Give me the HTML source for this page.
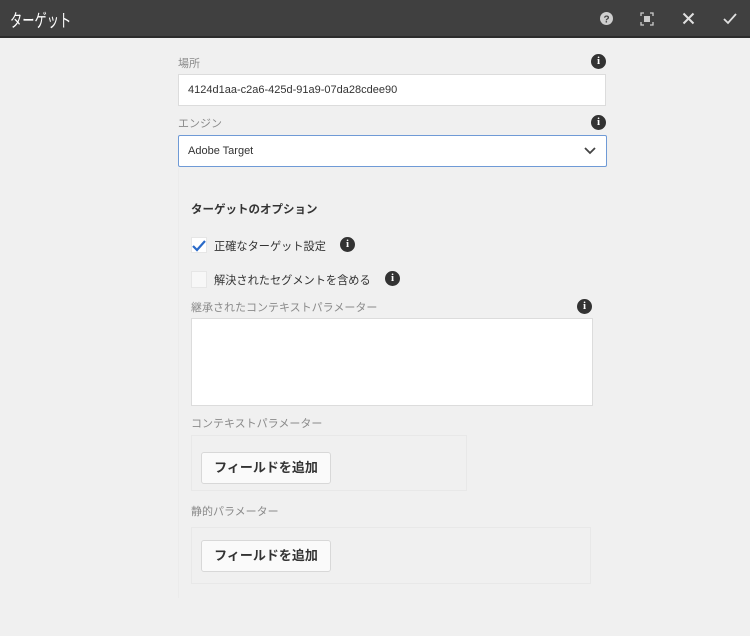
<!DOCTYPE html>
<html><head><meta charset="utf-8"><style>
*{box-sizing:border-box;margin:0;padding:0}
body{width:750px;height:636px;background:#f0f0f0;font-family:"Liberation Sans","Noto Sans CJK JP",sans-serif;position:relative;overflow:hidden}
.hdr{position:absolute;left:0;top:0;width:750px;height:38px;background:#404040;border-bottom:2px solid #2c2c2c}
.hdr .t{position:absolute;left:10px;top:7px;color:#fff;font-size:18px;transform:scaleX(0.68);transform-origin:left}
.a{position:absolute}
.lbl{position:absolute;font-size:11px;color:#8a8a8a}
.info{position:absolute;width:15px;height:15px;border-radius:50%;background:#333;color:#fff;font:bold 11px "Liberation Serif",serif;text-align:center;line-height:15px}
.inp{position:absolute;background:#fff;border:1px solid #dcdcdc;font-size:11px;color:#333;padding-left:9px}
.btn{position:absolute;background:#fafafa;border:1px solid #d8d8d8;border-radius:3px;font-size:13px;font-weight:bold;color:#333;text-align:center}
.box{position:absolute;border:1px solid #e8e8e8}
</style></head><body>
<div class="hdr"><div class="t">ターゲット</div>
<svg class="a" style="left:599px;top:11px" width="15" height="15"><circle cx="7.5" cy="7.5" r="6.5" fill="#cfcfcf"/><text x="7.5" y="11.5" font-size="10" font-weight="bold" text-anchor="middle" fill="#404040" font-family="Liberation Sans">?</text></svg>
<svg class="a" style="left:640px;top:12px" width="14" height="14" fill="none" stroke="#ccc" stroke-width="1.3"><path d="M1 4V1h3M10 1h3v3M13 10v3h-3M4 13H1v-3"/><rect x="4" y="4" width="6" height="6" fill="#ccc" stroke="none"/></svg>
<svg class="a" style="left:682px;top:12px" width="13" height="13" stroke="#e0e0e0" stroke-width="2"><path d="M1.5 1.5l10 10M11.5 1.5l-10 10"/></svg>
<svg class="a" style="left:723px;top:12px" width="14" height="13" fill="none" stroke="#e0e0e0" stroke-width="1.8"><path d="M1 7l4 4L13 2"/></svg>
</div>
<div class="box" style="left:178px;top:168px;width:428px;height:430px;border-color:#ebebeb;border-top:none;border-right:none;border-bottom:none"></div>
<div class="lbl" style="left:178px;top:55px">場所</div>
<div class="info" style="left:591px;top:54px">i</div>
<div class="inp" style="left:178px;top:74px;width:428px;height:32px;line-height:30px">4124d1aa-c2a6-425d-91a9-07da28cdee90</div>
<div class="lbl" style="left:178px;top:115px">エンジン</div>
<div class="info" style="left:591px;top:115px">i</div>
<div class="inp" style="left:178px;top:135px;width:429px;height:32px;line-height:30px;border-color:#6f9ad6;border-radius:2px">Adobe Target</div>
<svg class="a" style="left:584px;top:146px" width="12" height="9" fill="none" stroke="#444" stroke-width="1.8"><path d="M1 2l5 5 5-5"/></svg>
<div class="a" style="left:191px;top:201px;font-size:11.5px;font-weight:bold;color:#333">ターゲットのオプション</div>
<div class="a" style="left:191px;top:237px;width:16px;height:16px;background:#fff;border:1px solid #e6e6e6"></div>
<svg class="a" style="left:191px;top:238px" width="16" height="15" fill="none" stroke="#2a6ac8" stroke-width="2.2"><path d="M2 8l4 4 8-9"/></svg>
<div class="a" style="left:214px;top:238px;font-size:11.2px;color:#333">正確なターゲット設定</div>
<div class="info" style="left:340px;top:237px">i</div>
<div class="a" style="left:191px;top:271px;width:16px;height:17px;background:#f7f7f7;border:1px solid #e6e6e6"></div>
<div class="a" style="left:214px;top:272px;font-size:11.2px;color:#333">解決されたセグメントを含める</div>
<div class="info" style="left:385px;top:271px">i</div>
<div class="lbl" style="left:191px;top:299px">継承されたコンテキストパラメーター</div>
<div class="info" style="left:577px;top:299px">i</div>
<div class="inp" style="left:191px;top:318px;width:402px;height:88px"></div>
<div class="lbl" style="left:191px;top:415px">コンテキストパラメーター</div>
<div class="box" style="left:191px;top:435px;width:276px;height:56px"></div>
<div class="btn" style="left:201px;top:452px;width:130px;height:32px;line-height:30px">フィールドを追加</div>
<div class="lbl" style="left:191px;top:503px">静的パラメーター</div>
<div class="box" style="left:191px;top:527px;width:400px;height:57px"></div>
<div class="btn" style="left:201px;top:540px;width:130px;height:32px;line-height:30px">フィールドを追加</div>
</body></html>
